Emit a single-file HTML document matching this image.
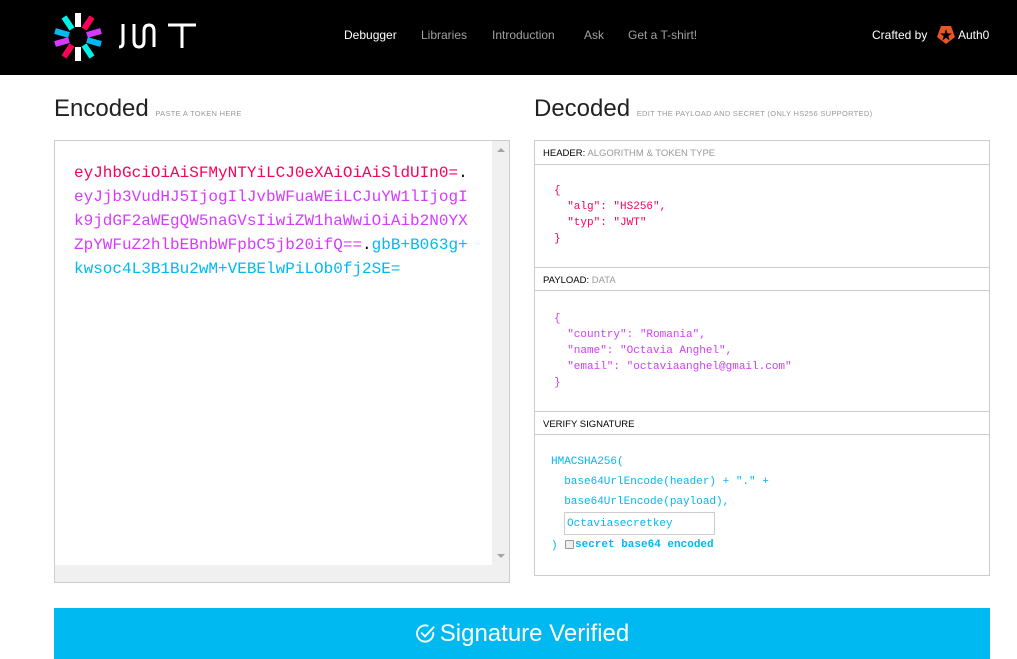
<!DOCTYPE html>
<html><head><style>
*{margin:0;padding:0;box-sizing:border-box}
body{width:1017px;height:659px;overflow:hidden;background:#fff;font-family:"Liberation Sans",sans-serif;position:relative}
.top{position:absolute;left:0;top:0;width:1017px;height:75px;background:#000}
.nav{position:absolute;top:28px;font-size:12px;color:#a0a0a0}
.abs{position:absolute}
.mono{font-family:"Liberation Mono",monospace}
h1{position:absolute;font-weight:normal;font-size:24px;color:#222}
.sm{font-size:7.5px;color:#999;letter-spacing:.3px}
.lbl{position:absolute;left:0;width:100%;height:24px;border-bottom:1px solid #ccc;font-size:9.5px;color:#000;padding:7px 8px}
.lbl span{color:#999}
.code{position:absolute;font-family:"Liberation Mono",monospace;font-size:11px;line-height:16px;white-space:pre}
</style></head><body>
<div class="top">
<svg class="abs" style="left:53px;top:12px" width="50" height="50" viewBox="-25 -25 50 50">
<g stroke-width="6" stroke-linecap="butt">
<line x1="0" y1="-24" x2="0" y2="-10" stroke="#fff"/>
<line x1="0" y1="24" x2="0" y2="10" stroke="#fff"/>
<line x1="-14" y1="-20" x2="-6" y2="-8" stroke="#00f2e6"/>
<line x1="14" y1="-20" x2="6" y2="-8" stroke="#fb015b"/>
<line x1="-23" y1="-6" x2="-9" y2="-2" stroke="#00b9f1"/>
<line x1="23" y1="-6" x2="9" y2="-2" stroke="#d63aff"/>
<line x1="-23" y1="7" x2="-9" y2="3" stroke="#d63aff"/>
<line x1="23" y1="7" x2="9" y2="3" stroke="#00b9f1"/>
<line x1="-14" y1="20" x2="-6" y2="8" stroke="#fb015b"/>
<line x1="14" y1="20" x2="6" y2="8" stroke="#00f2e6"/>
</g></svg>
<svg class="abs" style="left:118px;top:23px" width="82" height="26" viewBox="0 0 82 26" fill="none" stroke="#fff" stroke-width="3">
<path d="M5 1V20Q5 24 1 24"/>
<path d="M16 1V18Q16 24 21 24Q26 24 26 18V8Q26 2 31 2Q36 2 36 8V24"/>
<path d="M50 2H78M64 2V25"/>
</svg>
<div class="nav" style="left:344px;color:#fff">Debugger</div>
<div class="nav" style="left:421px">Libraries</div>
<div class="nav" style="left:492px">Introduction</div>
<div class="nav" style="left:584px">Ask</div>
<div class="nav" style="left:628px">Get a T-shirt!</div>
<div class="nav" style="left:872px;color:#fff">Crafted by</div>
<svg class="abs" style="left:937px;top:25px" width="18" height="19" viewBox="0 0 18 19"><path d="M4 1H14L18 12L9 19L0 12Z" fill="#eb5424"/><path d="M9 4L10.5 8.5H15L11.3 11L12.7 15.5L9 12.7L5.3 15.5L6.7 11L3 8.5H7.5Z" fill="#000"/></svg>
<div class="nav" style="left:958px;color:#fff">Auth0</div>
</div>

<h1 style="left:54px;top:95px">Encoded <span class="sm">PASTE A TOKEN HERE</span></h1>
<h1 style="left:534px;top:95px">Decoded <span class="sm">EDIT THE PAYLOAD AND SECRET (ONLY HS256 SUPPORTED)</span></h1>

<div class="abs" style="left:54px;top:140px;width:456px;height:443px;border:1px solid #ccc">
<div class="abs" style="right:0;top:0;width:17px;height:425px;background:#f0f0f0"></div>
<div class="abs" style="right:4px;top:7px;width:0;height:0;border:4px solid transparent;border-bottom:4px solid #a3a3a3;border-top:0"></div>
<div class="abs" style="right:4px;top:413px;width:0;height:0;border:4px solid transparent;border-top:4px solid #a3a3a3;border-bottom:0"></div>
<div class="abs" style="left:0;bottom:0;width:100%;height:17px;background:#f0f0f0"></div>
<div class="abs mono" style="left:19px;top:20px;font-size:16px;line-height:24px;white-space:pre"><span style="color:#fb015b">eyJhbGciOiAiSFMyNTYiLCJ0eXAiOiAiSldUIn0=</span>.
<span style="color:#d63aff">eyJjb3VudHJ5IjogIlJvbWFuaWEiLCJuYW1lIjogI
k9jdGF2aWEgQW5naGVsIiwiZW1haWwiOiAib2N0YX
ZpYWFuZ2hlbEBnbWFpbC5jb20ifQ==</span>.<span style="color:#00b9f1">gbB+B063g+
kwsoc4L3B1Bu2wM+VEBElwPiLOb0fj2SE=</span></div>
</div>

<div class="abs" style="left:534px;top:140px;width:456px;height:436px;border:1px solid #ccc">
<div class="lbl" style="top:0">HEADER: <span>ALGORITHM &amp; TOKEN TYPE</span></div>
<div class="code" style="left:19px;top:42px;color:#fb015b">{
  "alg": "HS256",
  "typ": "JWT"
}</div>
<div class="lbl" style="top:126px;border-top:1px solid #ccc">PAYLOAD: <span>DATA</span></div>
<div class="code" style="left:19px;top:170px;color:#d63aff">{
  "country": "Romania",
  "name": "Octavia Anghel",
  "email": "octaviaanghel@gmail.com"
}</div>
<div class="lbl" style="top:270px;border-top:1px solid #ccc">VERIFY SIGNATURE</div>
<div class="code" style="left:16px;top:311px;color:#00b9f1;line-height:20px">HMACSHA256(
  base64UrlEncode(header) + "." +
  base64UrlEncode(payload),</div>
<div class="code" style="left:16px;top:397px;color:#00b9f1">)</div>
<div class="abs mono" style="left:29px;top:371px;width:151px;height:23px;border:1px solid #ccc;font-size:11px;color:#00b9f1;padding:5px 2px">Octaviasecretkey</div>
<div class="abs" style="left:30px;top:399px;width:9px;height:9px;border:1px solid #999;background:#eee;border-radius:1px"></div>
<div class="abs mono" style="left:40px;top:398px;font-size:11px;font-weight:bold;color:#00b9f1">secret base64 encoded</div>
</div>

<div class="abs" style="left:54px;top:608px;width:936px;height:51px;background:#00b9f1;color:#fff;font-size:24px;text-align:center;line-height:51px">
<svg style="vertical-align:-3px;margin-right:4px" width="21" height="21" viewBox="0 0 22 22" fill="none" stroke="#fff" stroke-width="2"><path d="M19 9.5A8.5 8.5 0 1 1 14 3.2"/><path d="M6.5 10L10.5 14L20 4"/></svg>Signature Verified</div>
</body></html>
